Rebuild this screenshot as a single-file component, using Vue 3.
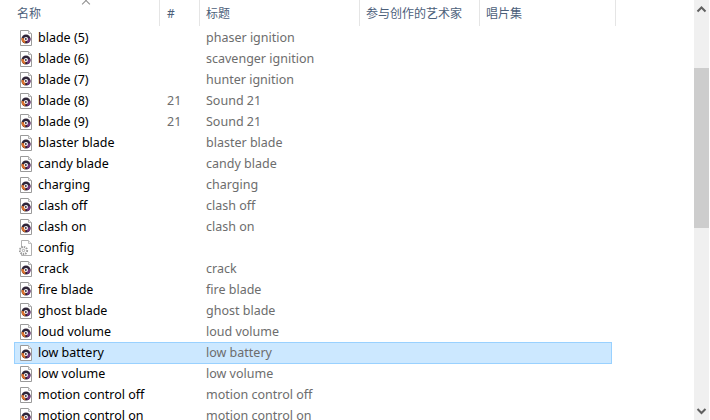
<template>
  <div class="explorer">
    <div class="pane">
      <div class="header">
        <div class="hcol name">名称<span class="sort"></span></div>
        <div class="hcol num">#</div>
        <div class="hcol title">标题</div>
        <div class="hcol artist">参与创作的艺术家</div>
        <div class="hcol album">唱片集</div>
      </div>
      <div class="list">
        <div v-for="f in files" :key="f.name" class="row" :class="{ selected: f.name === 'low battery' }">
          <div class="cell name">
            <svg v-if="f.name !== 'config'" class="icon" width="14" height="16" viewBox="0 0 14 16">
              <path d="M1.5 .5H9.5L12.5 3.5V15.5H1.5Z" fill="#fff" stroke="#9a9a9a" />
              <path d="M9.5 .5V3.5H12.5" fill="#ececec" stroke="#b4b4b4" />
              <circle cx="7" cy="9" r="4.5" fill="#2e2438" />
              <path d="M6 13.4A4.5 4.5 0 0 1 2.7 7.8L7 9Z" fill="#d9702c" />
              <path d="M8.5 13.2A4.5 4.5 0 0 0 11.4 8L7 9Z" fill="#6f3478" />
              <circle cx="7" cy="9" r="2" fill="#fff" />
              <path d="M6.2 7.8L8.4 9L6.2 10.2Z" fill="#1f1826" />
            </svg>
            <svg v-else class="icon" width="14" height="16" viewBox="0 0 14 16">
              <path d="M2.5 .5H9.5L12.5 3.5V15.5H2.5Z" fill="#fff" stroke="#b0b0b0" />
              <path d="M9.5 .5V3.5H12.5" fill="#eee" stroke="#c0c0c0" />
              <circle cx="4.5" cy="10.5" r="3.6" fill="#fff" stroke="#9a9a9a" stroke-width="2" stroke-dasharray="1.5 .9" />
              <circle cx="4.5" cy="10.5" r="1.2" fill="#fff" stroke="#a5a5a5" />
            </svg>
            <span>{{ f.name }}</span>
          </div>
          <div class="cell num">{{ f.num }}</div>
          <div class="cell title">{{ f.title }}</div>
        </div>
      </div>
    </div>
    <div class="scrollbar">
      <svg width="15" height="17" viewBox="0 0 15 17"><path d="M3.5 11.5L7.5 7.5L11.5 11.5" fill="none" stroke="#606060" stroke-width="2" /></svg>
      <div class="track"><div class="thumb"></div></div>
      <svg width="15" height="17" viewBox="0 0 15 17"><path d="M3.5 6L7.5 10L11.5 6" fill="none" stroke="#606060" stroke-width="2" /></svg>
    </div>
  </div>
</template>

<script setup>
const files = [
  { name: "blade (5)", num: "", title: "phaser ignition" },
  { name: "blade (6)", num: "", title: "scavenger ignition" },
  { name: "blade (7)", num: "", title: "hunter ignition" },
  { name: "blade (8)", num: "21", title: "Sound 21" },
  { name: "blade (9)", num: "21", title: "Sound 21" },
  { name: "blaster blade", num: "", title: "blaster blade" },
  { name: "candy blade", num: "", title: "candy blade" },
  { name: "charging", num: "", title: "charging" },
  { name: "clash off", num: "", title: "clash off" },
  { name: "clash on", num: "", title: "clash on" },
  { name: "config", num: "", title: "" },
  { name: "crack", num: "", title: "crack" },
  { name: "fire blade", num: "", title: "fire blade" },
  { name: "ghost blade", num: "", title: "ghost blade" },
  { name: "loud volume", num: "", title: "loud volume" },
  { name: "low battery", num: "", title: "low battery" },
  { name: "low volume", num: "", title: "low volume" },
  { name: "motion control off", num: "", title: "motion control off" },
  { name: "motion control on", num: "", title: "motion control on" },
];
</script>

<style>
html,
body {
  margin: 0;
  overflow: hidden;
}
</style>

<style scoped>
.explorer {
  display: flex;
  width: 710px;
  height: 420px;
  overflow: hidden;
  background: #fff;
  font-family: "Noto Sans", "Noto Sans CJK SC", sans-serif;
  font-size: 12.5px;
}
.pane {
  flex: 1;
  min-width: 0;
  overflow: hidden;
}
.header {
  display: flex;
  height: 26px;
  margin-bottom: 1px;
  color: #4c607a;
  font-size: 12px;
}
.hcol {
  position: relative;
  box-sizing: border-box;
  padding-left: 6px;
  line-height: 27px;
  border-right: 1px solid #e5e5e5;
  white-space: nowrap;
}
.header .name {
  width: 160px;
  padding-left: 17px;
}
.header .num {
  width: 40px;
  padding-left: 7px;
}
.header .title {
  width: 160px;
}
.header .artist {
  width: 120px;
}
.header .album {
  width: 136px;
}
.sort {
  position: absolute;
  left: 83px;
  top: 1px;
  width: 5px;
  height: 5px;
  border-left: 1px solid #8c8c8c;
  border-top: 1px solid #8c8c8c;
  transform: rotate(45deg);
}
.list {
  padding-left: 14px;
}
.row {
  display: flex;
  box-sizing: border-box;
  width: 598px;
  height: 21px;
  line-height: 21px;
  color: #6d6d6d;
  white-space: nowrap;
}
.row.selected {
  height: 22px;
  margin-bottom: -1px;
  background: #cce8ff;
  outline: 1px solid #99d1ff;
  outline-offset: -1px;
}
.cell {
  box-sizing: border-box;
  height: 21px;
}
.cell.name {
  display: flex;
  align-items: center;
  width: 146px;
  padding-left: 5px;
  color: #000;
}
.icon {
  flex: none;
  margin-right: 5px;
}
.cell.num {
  width: 39px;
  padding-left: 7px;
}
.cell.title {
  padding-left: 7px;
}
.scrollbar {
  display: flex;
  flex-direction: column;
  flex: none;
  width: 15px;
  height: 420px;
  margin-right: 1px;
  background: #f0f0f0;
}
.scrollbar svg {
  display: block;
  flex: none;
}
.track {
  flex: 1;
}
.thumb {
  width: 15px;
  height: 160px;
  margin-top: 51px;
  background: #cdcdcd;
}
</style>
